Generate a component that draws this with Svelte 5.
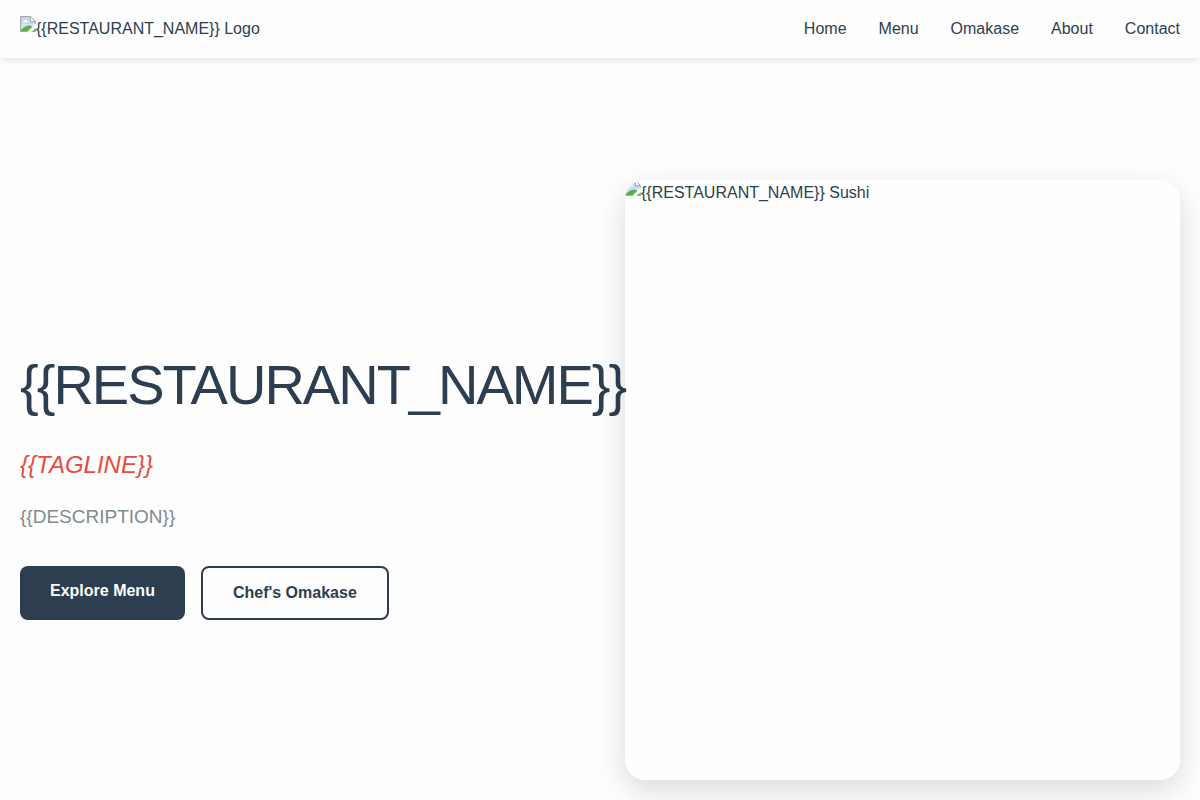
<script>
  const links = ['Home', 'Menu', 'Omakase', 'About', 'Contact'];
  const name = '{{RESTAURANT_NAME}}';
  const tagline = '{{TAGLINE}}';
  const description = '{{DESCRIPTION}}';
</script>

{#snippet placeholder()}
  <svg class="icon" viewBox="0 0 16 16" aria-hidden="true">
    <path d="M.5 .5H10.5L15.5 5.5V15.5H.5Z" fill="#c3d5f8" />
    <path d="M1 8H15V12H1Z" fill="#d6e2fb" />
    <path d="M3 6.5C2.6 5.2 3.6 4.5 4.4 4.7C4.9 3.2 7.1 3.4 7.2 5C8.3 4.9 8.5 6.1 7.9 6.5Z" fill="#fff" />
    <path d="M1 15V14C3.5 11.6 6.2 9.6 9 9.6C11.6 9.6 13.8 11.8 15 13.6V15Z" fill="#5db043" />
    <path d="M10.5 .5V5.5H15.5Z" fill="#fff" />
    <path d="M.5 15.5V.5H10.5L15.5 5.5V15.5ZM10.5 .5V5.5H15.5" fill="none" stroke="#a8a8a8" />
    <path d="M16 7.5L8 15V16H11.5L16 11.8Z" fill="#fefefe" />
  </svg>
{/snippet}

<header>
  <a class="logo" href="#home">{@render placeholder()}<span>{name} Logo</span></a>
  <nav>
    {#each links as link}
      <a href={'#' + link.toLowerCase()}>{link}</a>
    {/each}
  </nav>
</header>

<main>
  <section class="intro">
    <h1>{name}</h1>
    <p class="tagline">{tagline}</p>
    <p class="description">{description}</p>
    <div class="actions">
      <a class="button primary" href="#menu">Explore Menu</a>
      <a class="button secondary" href="#omakase">Chef's Omakase</a>
    </div>
  </section>
  <figure>
    {@render placeholder()}<span>{name} Sushi</span>
  </figure>
</main>

<style>
  :global(body) {
    margin: 0;
    background: #fefefe;
    color: #2c3e50;
    font-family: "Liberation Sans", Arial, sans-serif;
    font-size: 16px;
    line-height: 26px;
  }
  header {
    display: flex;
    justify-content: space-between;
    align-items: center;
    padding: 16px 20px;
    background: #fefefe;
    box-shadow: 0 4px 6px -1px rgba(0, 0, 0, 0.1);
  }
  a {
    color: inherit;
    text-decoration: none;
  }
  .logo,
  figure {
    display: flex;
    align-items: flex-start;
  }
  .icon {
    flex: none;
    width: 16px;
    height: 16px;
  }
  nav {
    display: flex;
    gap: 32px;
  }
  main {
    display: grid;
    grid-template-columns: minmax(0, 1fr) minmax(0, 1fr);
    align-items: center;
    gap: 50px;
    padding: 122px 20px 20px;
  }
  h1,
  p,
  figure {
    margin: 0;
  }
  h1 {
    margin-bottom: 16px;
    font-size: 56px;
    font-weight: 400;
    line-height: 90px;
    letter-spacing: -2px;
  }
  .tagline {
    margin-bottom: 16px;
    color: #e74c3c;
    font-size: 24px;
    font-style: italic;
    line-height: 38px;
  }
  .description {
    margin-bottom: 32px;
    color: #7f8c8d;
    font-size: 19px;
    line-height: 34px;
  }
  .actions {
    display: flex;
    gap: 16px;
  }
  .button {
    padding: 12px 30px;
    border-radius: 8px;
    font-weight: 700;
  }
  .primary {
    background: #2c3e50;
    color: #fefefe;
  }
  .secondary {
    border: 2px solid #2c3e50;
  }
  figure {
    min-height: 600px;
    overflow: hidden;
    border-radius: 20px;
    box-shadow: 0 10px 30px rgba(0, 0, 0, 0.15);
  }
</style>
